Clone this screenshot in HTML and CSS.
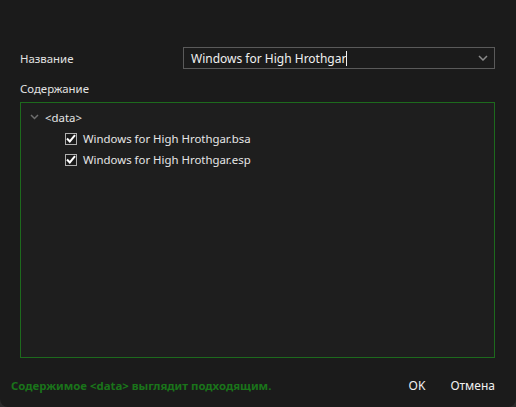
FILE: index.html
```html
<!DOCTYPE html>
<html lang="ru">
<head>
    <meta charset="UTF-8">
    <title>Установка мода</title>
    <link rel="stylesheet" href="styles.css">
</head>
<body>
    <div class="dialog">
        <div class="form">
            <div class="row">
                <label class="label">Название</label>
                <div class="combo">
                    <span class="combo-text">Windows for High Hrothgar<span class="caret"></span></span>
                    <svg class="combo-arrow" width="10" height="6" viewBox="0 0 10 6">
                        <path d="M1 1 L5 5 L9 1" fill="none" stroke="#8a8a8a" stroke-width="1.5"/>
                    </svg>
                </div>
            </div>

            <div class="label content-label">Содержание</div>

            <div class="tree">
                <div class="node">
                    <svg class="expander" width="9" height="6" viewBox="0 0 9 6">
                        <path d="M1 1 L4.5 4.5 L8 1" fill="none" stroke="#6e6e6e" stroke-width="1.5"/>
                    </svg>
                    <span>&lt;data&gt;</span>
                </div>
                <div class="leaf">
                    <span class="check">
                        <svg width="10" height="9" viewBox="0 0 10 9"><path d="M1 4.5 L3.8 7.5 L9 1.2" fill="none" stroke="#fff" stroke-width="2"/></svg>
                    </span>
                    <span>Windows for High Hrothgar.bsa</span>
                </div>
                <div class="leaf">
                    <span class="check">
                        <svg width="10" height="9" viewBox="0 0 10 9"><path d="M1 4.5 L3.8 7.5 L9 1.2" fill="none" stroke="#fff" stroke-width="2"/></svg>
                    </span>
                    <span>Windows for High Hrothgar.esp</span>
                </div>
            </div>
        </div>

        <div class="footer">
            <span class="status">Содержимое &lt;data&gt; выглядит подходящим.</span>
            <button class="btn btn-ok">OK</button>
            <button class="btn">Отмена</button>
        </div>
    </div>
</body>
</html>
```

FILE: styles.css
```css
/* Base */
html, body {
    margin: 0;
    padding: 0;
    background-color: #2b2b2b;
}

body {
    font-family: "Noto Sans", "Open Sans", sans-serif;
    font-size: 11.4px;
    color: #e6e6e6;
}

.dialog {
    width: 516px;
    height: 407px;
    box-sizing: border-box;
    background-color: #1b1b1b;
    border-radius: 0 0 8px 8px;
    display: flex;
    flex-direction: column;
    padding: 47px 21px 0 20px;
}

/* Name row */
.row {
    display: flex;
    align-items: center;
}

.label {
    color: #e2e2e2;
}

.row .label {
    width: 163px;
}

.combo {
    flex: 1;
    height: 22px;
    box-sizing: border-box;
    border: 1px solid #5a5a5a;
    background-color: #1b1b1b;
    display: flex;
    align-items: center;
    padding: 0 7px;
}

.combo-text {
    flex: 1;
    color: #f0f0f0;
    font-size: 12px;
}

.caret {
    display: inline-block;
    width: 1px;
    height: 15px;
    background-color: #f0f0f0;
    vertical-align: -3px;
}

.combo-arrow {
    margin-right: -1px;
}

.content-label {
    margin-top: 12px;
    height: 18px;
}

/* Tree */
.tree {
    margin-top: 3px;
    height: 256px;
    box-sizing: border-box;
    border: 1px solid #1d6a1d;
    background-color: #1e1e1e;
    padding: 3px 0 0 9px;
}

.node {
    display: flex;
    align-items: center;
    height: 22px;
    gap: 6px;
}

.leaf {
    display: flex;
    align-items: center;
    height: 21px;
    padding-left: 35px;
    gap: 6px;
}

.check {
    width: 12px;
    height: 12px;
    box-sizing: border-box;
    border: 1px solid #b0b0b0;
    background-color: #1b1b1b;
    display: flex;
    align-items: center;
    justify-content: center;
}

/* Footer */
.footer {
    display: flex;
    align-items: center;
    height: 57px;
    padding-top: 5px;
    margin-left: -9px;
}

.status {
    flex: 1;
    color: #1a741a;
    font-weight: bold;
}

.btn {
    background: none;
    border: none;
    padding: 0;
    font: inherit;
    font-size: 12px;
    color: #f0f0f0;
}

.btn-ok {
    margin-right: 25px;
}
```
